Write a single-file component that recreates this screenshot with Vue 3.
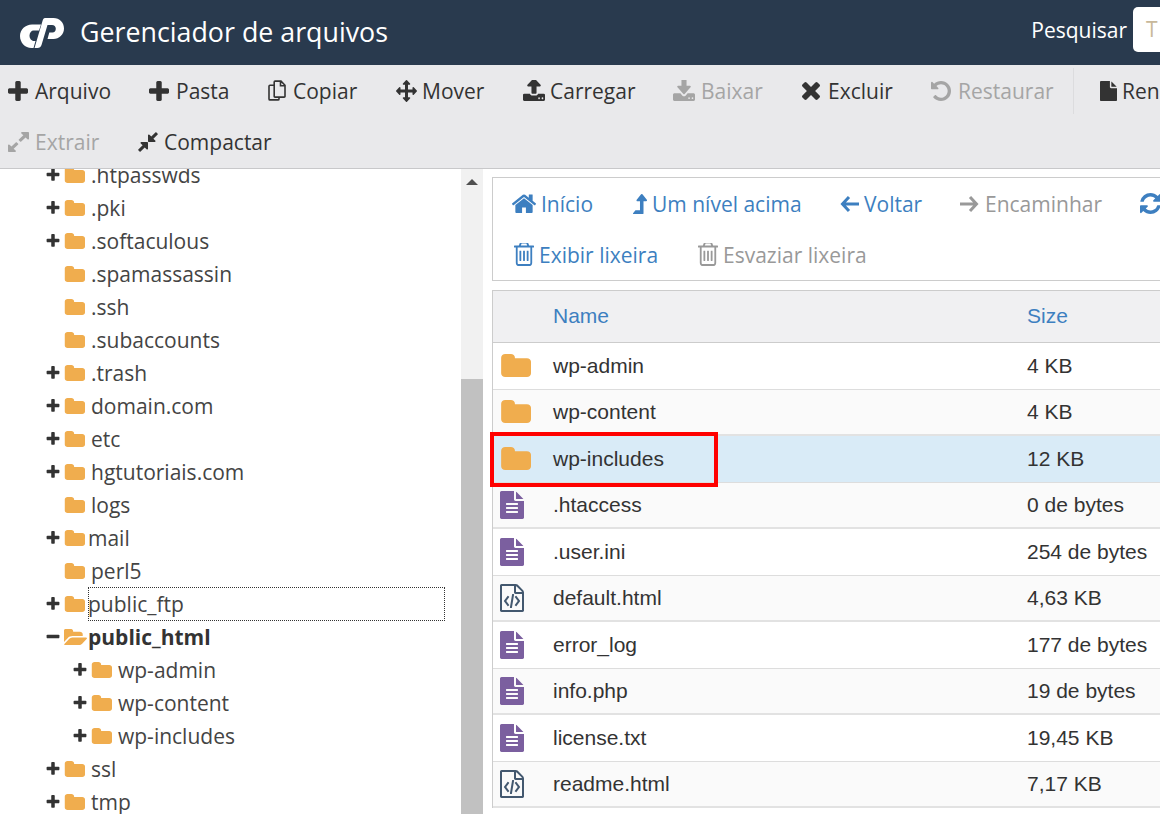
<template>
  <div class="file-manager">
    <header class="top-bar">
      <div class="brand">
        <svg class="logo" viewBox="0 0 44 30">
          <path d="M12 6.500H21L19 12.500H13.500C11.500 12.500 9.500 14.500 9.500 17.500C9.500 20.500 11.500 23 14 23H15.500L13.500 30H11.500C5 30 0 24.500 0 18C0 11.500 5.500 6.500 12 6.500Z" />
          <path d="M25 0H33.500C39.500 0 44 4.500 44 10.500C44 16.500 39 21 33.500 21H27.500L29.300 14.500H32.500C34.500 14.500 35.800 13 35.800 10.800C35.800 8.500 34.300 7 32 7H27.500L21.500 27C20.900 29 19.500 30 17.500 30H14.500L22.500 3C23 1.200 23.800 0 25 0Z" />
        </svg>
        <h1>Gerenciador de arquivos</h1>
      </div>
      <div class="search">
        <label>Pesquisar</label>
        <div class="search-input">T</div>
      </div>
    </header>

    <div class="toolbar">
      <div class="toolbar-row" v-for="(row, r) in toolbar" :key="r">
        <template v-for="item in row" :key="item.label">
          <span v-if="item.divider" class="divider"></span>
          <a class="tool" :class="{ disabled: item.disabled }" :style="{ width: item.w + 'px' }">
            <svg
              class="glyph"
              :class="{ outline: glyphs[item.icon].outline }"
              :viewBox="glyphs[item.icon].vb"
              :width="item.iw"
              :height="item.ih"
              :style="{ marginRight: item.gap + 'px' }"
              preserveAspectRatio="none"
            >
              <path :d="glyphs[item.icon].d" />
            </svg>
            <span>{{ item.label }}</span>
          </a>
        </template>
      </div>
    </div>

    <div class="main">
      <aside class="sidebar">
        <ul class="tree">
          <li
            v-for="node in tree"
            :key="node.name + node.depth"
            class="tree-row"
            :class="{ deep: node.depth, current: node.open, focused: node.focus, tight: node.tight }"
          >
            <svg v-if="node.toggle" class="toggle" viewBox="128 128 1536 1536">
              <path :d="node.open ? glyphs.minus.d : glyphs.plus.d" />
            </svg>
            <span v-else class="toggle"></span>
            <svg v-if="node.open" class="tree-folder open" viewBox="0 128 1845 1408" preserveAspectRatio="none">
              <path :d="glyphs.folderOpen.d" />
            </svg>
            <svg v-else class="tree-folder" viewBox="0 128 1728 1408" preserveAspectRatio="none">
              <path :d="glyphs.folder.d" />
            </svg>
            <span class="tree-name">{{ node.name }}</span>
          </li>
        </ul>
        <div class="scrollbar">
          <span class="scroll-up"></span>
          <span class="scroll-thumb"></span>
        </div>
      </aside>

      <section class="content">
        <nav class="actions">
          <div v-for="(row, r) in actions" :key="r" class="actions-row">
            <a
              v-for="a in row"
              :key="a.label"
              class="action"
              :class="{ disabled: a.disabled }"
              :style="{ width: a.w + 'px' }"
            >
              <svg
                class="glyph"
                :class="{ outline: glyphs[a.icon].outline }"
                :viewBox="glyphs[a.icon].vb"
                :width="a.iw"
                :height="a.ih"
                :style="{ marginRight: a.gap + 'px' }"
                preserveAspectRatio="none"
              >
                <path :d="glyphs[a.icon].d" />
              </svg>
              <span>{{ a.label }}</span>
            </a>
          </div>
        </nav>

        <div class="files">
          <div class="file-row file-head">
            <span class="col-icon"></span>
            <span class="col-name">Name</span>
            <span class="col-size">Size</span>
          </div>
          <div
            v-for="(f, i) in files"
            :key="f.name"
            class="file-row"
            :class="{ selected: f.selected, striped: i % 2 === 1 }"
          >
            <span class="col-icon">
              <svg v-if="f.type === 'folder'" class="ic-folder" viewBox="0 128 1728 1408" preserveAspectRatio="none">
                <path :d="glyphs.folder.d" />
              </svg>
              <svg v-else-if="f.type === 'text'" class="ic-file" viewBox="128 0 1536 1792">
                <path :d="glyphs.fileText.d" />
              </svg>
              <svg v-else class="ic-code" viewBox="128 0 1536 1792">
                <path :d="glyphs.fileCode.d" />
              </svg>
            </span>
            <span class="col-name">{{ f.name }}</span>
            <span class="col-size">{{ f.size }}</span>
          </div>
        </div>
      </section>
    </div>

    <div class="highlight"></div>
  </div>
</template>

<script setup>
// Icon shapes, each with the box that fits it tightly
const glyphs = {
  plus: { vb: '192 128 1408 1408', d: 'M1600 736v192q0 40-28 68t-68 28h-416v416q0 40-28 68t-68 28h-192q-40 0-68-28t-28-68v-416h-416q-40 0-68-28t-28-68v-192q0-40 28-68t68-28h416v-416q0-40 28-68t68-28h192q40 0 68 28t28 68v416h416q40 0 68 28t28 68z' },
  minus: { d: 'M1600 736v192q0 40-28 68t-68 28h-1216q-40 0-68-28t-28-68v-192q0-40 28-68t68-28h1216q40 0 68 28t28 68z' },
  folder: { d: 'M1728 608v704q0 92-66 158t-158 66h-1216q-92 0-158-66t-66-158v-960q0-92 66-158t158-66h320q92 0 158 66t66 158v32h672q92 0 158 66t66 158z' },
  folderOpen: { d: 'M1845 931q0 35-53 93l-336 396q-43 51-120.500 86.500t-143.500 35.500h-1088q-34 0-60.500-13t-26.500-43q0-35 53-93l336-396q43-51 120.500-86.500t143.500-35.500h1088q34 0 60.500 13t26.500 43zm-343-344v160h-832q-94 0-197 47.500t-164 119.500l-337 396-5 6q0-4-.5-12.500t-.5-12.500v-960q0-92 66-158t158-66h320q92 0 158 66t66 158v32h544q92 0 158 66t66 158z' },
  fileText: { d: 'M1596 476q14 14 28 36h-472v-472q22 14 36 28zm-476 164h544v1056q0 40-28 68t-68 28h-1344q-40 0-68-28t-28-68v-1600q0-40 28-68t68-28h800v544q0 40 28 68t68 28zm160 736v-64q0-14-9-23t-23-9h-704q-14 0-23 9t-9 23v64q0 14 9 23t23 9h704q14 0 23-9t9-23zm0-256v-64q0-14-9-23t-23-9h-704q-14 0-23 9t-9 23v64q0 14 9 23t23 9h704q14 0 23-9t9-23zm0-256v-64q0-14-9-23t-23-9h-704q-14 0-23 9t-9 23v64q0 14 9 23t23 9h704q14 0 23-9t9-23z' },
  fileCode: { d: 'M1596 380q28 28 48 76t20 88v1152q0 40-28 68t-68 28h-1344q-40 0-68-28t-28-68v-1600q0-40 28-68t68-28h896q40 0 88 20t76 48zm-444-244v376h376q-10-29-22-41l-313-313q-12-12-41-22zm384 1528v-1024h-416q-40 0-68-28t-28-68v-416h-768v1536h1280zm-928-896q8-11 21-12.500t24 6.500l51 38q11 8 12.500 21t-6.500 24l-182 243 182 243q8 11 6.500 24t-12.500 21l-51 38q-11 8-24 6.500t-21-12.500l-226-301q-14-19 0-38zm802 301q14 19 0 38l-226 301q-8 11-21 12.500t-24-6.500l-51-38q-11-8-12.500-21t6.500-24l182-243-182-243q-8-11-6.500-24t12.500-21l51-38q11-8 24-6.500t21 12.500zm-620 461q-13-2-20.500-13t-5.500-24l138-831q2-13 13-20.500t24-5.500l63 10q13 2 20.500 13t5.500 24l-138 831q-2 13-13 20.500t-24 5.500z' },
  home: { vb: '96 224 1600 1312', d: 'M1472 992v480q0 26-19 45t-45 19h-384v-384h-256v384h-384q-26 0-45-19t-19-45v-480q0-1 .5-3t.5-3l575-474 575 474q1 2 1 6zm223-69l-62 74q-8 9-21 11h-3q-13 0-21-7l-692-577-692 577q-12 8-24 7-13-2-21-11l-62-74q-8-10-7-23.500t11-21.500l719-599q32-26 76-26t76 26l244 204v-195q0-14 9-23t23-9h192q14 0 23 9t9 23v408l219 182q10 8 11 21.500t-7 23.500z' },
  arrowLeft: { vb: '0 0 19 18', outline: true, d: 'M9 2 2.500 9 9 16M3 9h16' },
  arrowRight: { vb: '0 0 19 18', outline: true, d: 'M10 2l6.500 7-6.500 7M16 9H0' },
  levelUp: { vb: '381 162 1020 1403', d: 'M1395 635q-18 34-57 34h-192v864q0 14-9 23t-23 9h-704q-21 0-29-18-8-20 4-35l160-192q9-11 25-11h320v-640h-192q-40 0-57-35-17-35 10-66l320-384q18-22 49-22t49 22l320 384q26 31 9 66z' },
  trash: { vb: '192 224 1408 1440', d: 'M704 736v576q0 14-9 23t-23 9h-64q-14 0-23-9t-9-23v-576q0-14 9-23t23-9h64q14 0 23 9t9 23zm256 0v576q0 14-9 23t-23 9h-64q-14 0-23-9t-9-23v-576q0-14 9-23t23-9h64q14 0 23 9t9 23zm256 0v576q0 14-9 23t-23 9h-64q-14 0-23-9t-9-23v-576q0-14 9-23t23-9h64q14 0 23 9t9 23zm128 724v-948h-896v948q0 22 7 40.500t14.500 27 10.500 8.500h832q3 0 10.500-8.500t14.500-27 7-40.500zm-672-1076h448l-48-117q-7-9-17-11h-317q-10 2-17 11zm928 32v64q0 14-9 23t-23 9h-96v948q0 83-47 143.500t-113 60.500h-832q-66 0-113-58.500t-47-141.500v-952h-96q-14 0-23-9t-9-23v-64q0-14 9-23t23-9h309l70-167q15-37 54-63t79-26h320q40 0 79 26t54 63l70 167h309q14 0 23 9t9 23z' },
  refresh: { vb: '128 128 1536 1536', d: 'M1639 1056q0 5-1 7-64 268-268 434.500t-478 166.500q-146 0-282.500-55t-243.500-157l-129 129q-19 19-45 19t-45-19-19-45v-448q0-26 19-45t45-19h448q26 0 45 19t19 45-19 45l-137 137q71 66 161 102t187 36q134 0 250-65t186-179q11-17 53-117 8-23 30-23h192q13 0 22.500 9.500t9.500 22.500zm25-800v448q0 26-19 45t-45 19h-448q-26 0-45-19t-19-45 19-45l138-138q-148-137-349-137-134 0-250 65t-186 179q-11 17-53 117-8 23-30 23h-199q-13 0-22.500-9.500t-9.500-22.500v-7q65-268 270-434.500t480-166.500q146 0 284 55.500t245 156.500l130-129q19-19 45-19t45 19 19 45z' },
  times: { vb: '302 366 1188 1188', d: 'M1490 1322q0 40-28 68l-136 136q-28 28-68 28t-68-28l-294-294-294 294q-28 28-68 28t-68-28l-136-136q-28-28-28-68t28-68l294-294-294-294q-28-28-28-68t28-68l136-136q28-28 68-28t68 28l294 294 294-294q28-28 68-28t68 28l136 136q28 28 28 68t-28 68l-294 294 294 294q28 28 28 68z' },
  move: { vb: '0 0 1792 1792', d: 'M1792 896q0 26-19 45l-256 256q-19 19-45 19t-45-19-19-45v-128h-384v384h128q26 0 45 19t19 45-19 45l-256 256q-19 19-45 19t-45-19l-256-256q-19-19-19-45t19-45 45-19h128v-384h-384v128q0 26-19 45t-45 19-45-19l-256-256q-19-19-19-45t19-45l256-256q19-19 45-19t45 19 19 45v128h384v-384h-128q-26 0-45-19t-19-45 19-45l256-256q19-19 45-19t45 19l256 256q19 19 19 45t-19 45-45 19h-128v384h384v-128q0-26 19-45t45-19 45 19l256 256q19 19 19 45z' },
  copy: { vb: '0 0 18 20', outline: true, d: 'M7 1h6l4 4v10.500a.8.8 0 0 1-.8.8H7a.8.8 0 0 1-.8-.8V1.800A.8.8 0 0 1 7 1zM12.500 1v4.500H17M6 5H2a1 1 0 0 0-1 1v12a1 1 0 0 0 1 1h8a1 1 0 0 0 1-1v-2' },
  upload: { vb: '64 192 1664 1472', d: 'M1344 1472q0-26-19-45t-45-19-45 19-19 45 19 45 45 19 45-19 19-45zm256 0q0-26-19-45t-45-19-45 19-19 45 19 45 45 19 45-19 19-45zm128-224v320q0 40-28 68t-68 28h-1472q-40 0-68-28t-28-68v-320q0-40 28-68t68-28h427q21 56 70.500 92t110.500 36h256q61 0 110.500-36t70.500-92h427q40 0 68 28t28 68zm-325-648q-17 40-59 40h-256v448q0 26-19 45t-45 19h-256q-26 0-45-19t-19-45v-448h-256q-42 0-59-40-17-39 14-69l448-448q18-19 45-19t45 19l448 448q31 30 14 69z' },
  download: { vb: '64 128 1664 1408', d: 'M1344 1344q0-26-19-45t-45-19-45 19-19 45 19 45 45 19 45-19 19-45zm256 0q0-26-19-45t-45-19-45 19-19 45 19 45 45 19 45-19 19-45zm128-224v320q0 40-28 68t-68 28h-1472q-40 0-68-28t-28-68v-320q0-40 28-68t68-28h465l135 136q58 56 136 56t136-56l136-136h464q40 0 68 28t28 68zm-325-569q17 41-14 70l-448 448q-18 19-45 19t-45-19l-448-448q-31-29-14-70 17-39 59-39h256v-448q0-26 19-45t45-19h256q26 0 45 19t19 45v448h256q42 0 59 39z' },
  undo: { vb: '128 128 1536 1536', d: 'M1664 896q0 156-61 298t-164 245-245 164-298 61q-172 0-327-72.500t-264-204.500q-7-10-6.500-22.500t8.500-20.500l137-138q10-9 25-9 16 2 23 12 73 95 179 147t225 52q104 0 198.500-40.500t163.500-109.500 109.500-163.500 40.500-198.500-40.500-198.500-109.500-163.500-163.500-109.500-198.500-40.500q-98 0-188 35.500t-160 101.500l137 138q31 30 14 69-17 40-59 40h-448q-26 0-45-19t-19-45v-448q0-42 40-59 39-17 69 14l130 129q107-101 244.500-156.500t284.500-55.500q156 0 298 61t245 164 164 245 61 298z' },
  file: { vb: '128 0 1536 1792', d: 'M1152 512v-472q22 14 36 28l408 408q14 14 28 36h-472zm-128 32q0 40 28 68t68 28h544v1056q0 40-28 68t-68 28h-1344q-40 0-68-28t-28-68v-1600q0-40 28-68t68-28h800v544z' },
  expand: { vb: '128 128 1536 1536', d: 'M883 1056q0 13-10 23l-332 332 144 144q19 19 19 45t-19 45-45 19h-448q-26 0-45-19t-19-45v-448q0-26 19-45t45-19 45 19l144 144 332-332q10-10 23-10t23 10l114 114q10 10 10 23zm781-864v448q0 26-19 45t-45 19-45-19l-144-144-332 332q-10 10-23 10t-23-10l-114-114q-10-10-10-23t10-23l332-332-144-144q-19-19-19-45t19-45 45-19h448q26 0 45 19t19 45z' },
  compress: { vb: '128 128 1536 1536', d: 'M896 960v448q0 26-19 45t-45 19-45-19l-144-144-332 332q-10 10-23 10t-23-10l-114-114q-10-10-10-23t10-23l332-332-144-144q-19-19-19-45t19-45 45-19h448q26 0 45 19t19 45zm755-672q0 13-10 23l-332 332 144 144q19 19 19 45t-19 45-45 19h-448q-26 0-45-19t-19-45v-448q0-26 19-45t45-19 45 19l144 144 332-332q10-10 23-10t23 10l114 114q10 10 10 23z' }
}

const toolbar = [
  [
    { label: 'Arquivo', icon: 'plus', w: 141, iw: 20, ih: 20, gap: 7 },
    { label: 'Pasta', icon: 'plus', w: 119, iw: 20, ih: 20, gap: 7 },
    { label: 'Copiar', icon: 'copy', w: 128, iw: 18, ih: 21, gap: 7 },
    { label: 'Mover', icon: 'move', w: 127, iw: 21, ih: 22, gap: 5 },
    { label: 'Carregar', icon: 'upload', w: 150, iw: 22, ih: 21, gap: 5 },
    { label: 'Baixar', icon: 'download', w: 129, iw: 22, ih: 21, gap: 6, disabled: true },
    { label: 'Excluir', icon: 'times', w: 129, iw: 18, ih: 18, gap: 8 },
    { label: 'Restaurar', icon: 'undo', w: 142, iw: 20, ih: 20, gap: 7, disabled: true },
    { label: 'Renomear', icon: 'file', w: 140, iw: 17, ih: 20, gap: 5, divider: true }
  ],
  [
    { label: 'Extrair', icon: 'expand', w: 130, iw: 21, ih: 20, gap: 6, disabled: true },
    { label: 'Compactar', icon: 'compress', w: 160, iw: 20, ih: 20, gap: 6 }
  ]
]

const actions = [
  [
    { label: 'Início', icon: 'home', w: 121, iw: 24, ih: 19, gap: 5 },
    { label: 'Um nível acima', icon: 'levelUp', w: 207, iw: 14, ih: 20, gap: 5 },
    { label: 'Voltar', icon: 'arrowLeft', w: 120, iw: 19, ih: 18, gap: 5 },
    { label: 'Encaminhar', icon: 'arrowRight', w: 180, iw: 19, ih: 18, gap: 6, disabled: true },
    { label: 'Recarregar', icon: 'refresh', w: 140, iw: 21, ih: 21, gap: 5 }
  ],
  [
    { label: 'Exibir lixeira', icon: 'trash', w: 184, iw: 20, ih: 23, gap: 5 },
    { label: 'Esvaziar lixeira', icon: 'trash', w: 190, iw: 20, ih: 23, gap: 5, disabled: true }
  ]
]

const treeNames = [
  ['.htpasswds', 1], ['.pki', 1], ['.softaculous', 1], ['.spamassassin', 0], ['.ssh', 0],
  ['.subaccounts', 0], ['.trash', 1], ['domain.com', 1], ['etc', 1], ['hgtutoriais.com', 1],
  ['logs', 0]
]

const tree = [
  ...treeNames.map(([name, toggle]) => ({ name, toggle, depth: 0 })),
  { name: 'mail', toggle: 1, depth: 0, tight: true },
  { name: 'perl5', toggle: 0, depth: 0 },
  { name: 'public_ftp', toggle: 1, depth: 0, focus: true },
  { name: 'public_html', toggle: 1, depth: 0, open: true },
  { name: 'wp-admin', toggle: 1, depth: 1 },
  { name: 'wp-content', toggle: 1, depth: 1 },
  { name: 'wp-includes', toggle: 1, depth: 1 },
  { name: 'ssl', toggle: 1, depth: 0 },
  { name: 'tmp', toggle: 1, depth: 0 }
]

const files = [
  { name: 'wp-admin', size: '4 KB', type: 'folder' },
  { name: 'wp-content', size: '4 KB', type: 'folder' },
  { name: 'wp-includes', size: '12 KB', type: 'folder', selected: true },
  { name: '.htaccess', size: '0 de bytes', type: 'text' },
  { name: '.user.ini', size: '254 de bytes', type: 'text' },
  { name: 'default.html', size: '4,63 KB', type: 'code' },
  { name: 'error_log', size: '177 de bytes', type: 'text' },
  { name: 'info.php', size: '19 de bytes', type: 'text' },
  { name: 'license.txt', size: '19,45 KB', type: 'text' },
  { name: 'readme.html', size: '7,17 KB', type: 'code' }
]
</script>

<style>
html, body {
  margin: 0;
  overflow: hidden;
  background: #fff;
}
</style>

<style scoped>
.file-manager {
  position: relative;
  width: 1160px;
  height: 814px;
  overflow: hidden;
  font-family: "Open Sans", sans-serif;
  font-size: 21px;
  color: #333;
}

/* top bar */
.top-bar {
  display: flex;
  justify-content: space-between;
  align-items: center;
  height: 65px;
  padding-left: 20px;
  background: #293a4e;
  color: #fff;
  box-sizing: border-box;
}
.brand {
  display: flex;
  align-items: center;
}
.logo {
  width: 44px;
  height: 30px;
  fill: #fff;
  margin-right: 16px;
}
h1 {
  margin: -2px 0 0;
  font-size: 26.8px;
  font-weight: 400;
}
.search {
  display: flex;
  align-items: center;
  margin-right: -50px;
  margin-top: -6px;
}
.search label {
  margin-right: 6px;
}
.search-input {
  width: 77px;
  height: 45px;
  line-height: 45px;
  padding-left: 13px;
  background: #fff;
  border-radius: 5px;
  color: #c8b89a;
  box-sizing: border-box;
}

/* toolbar */
.toolbar {
  height: 104px;
  padding-left: 8px;
  background: #e9e9eb;
  border-bottom: 1px solid #c8c8ca;
  box-sizing: border-box;
}
.toolbar-row {
  display: flex;
  align-items: center;
  height: 51px;
  white-space: nowrap;
}
.tool {
  display: flex;
  align-items: center;
  flex: none;
  color: #333;
}
.tool.disabled {
  color: #a5a5a5;
}
.glyph {
  flex: none;
  fill: currentColor;
}
.glyph.outline {
  fill: none;
  stroke: currentColor;
  stroke-width: 3;
}
.tool .glyph.outline {
  stroke-width: 1.6;
}
.divider {
  flex: none;
  width: 1px;
  height: 46px;
  background: #dcdcde;
  margin-right: 26px;
}

/* main area */
.main {
  display: flex;
  height: 645px;
}
.sidebar {
  display: flex;
  width: 483px;
  flex: none;
  overflow: hidden;
}
.tree {
  flex: 1;
  margin: -11px 0 0;
  padding: 0;
  list-style: none;
}
.tree-row {
  display: flex;
  align-items: center;
  height: 33px;
  padding-left: 46px;
  color: #444;
}
.tree-row.deep {
  padding-left: 73px;
}
.toggle {
  width: 14px;
  height: 14px;
  flex: none;
  fill: #333;
  margin-right: 4px;
}
.tree-folder {
  width: 21px;
  height: 16px;
  flex: none;
  fill: #f0ad4e;
  margin-right: 6px;
}
.tree-folder.open {
  width: 23px;
  margin-right: 4px;
}
.tree-row.tight .tree-name {
  margin-left: -3px;
}
.tree-row.current .tree-name {
  font-weight: 700;
  color: #333;
  margin-left: -3px;
}
.tree-row.focused .tree-name {
  flex: none;
  width: 357px;
  height: 34px;
  line-height: 34px;
  margin-left: -3px;
  outline: 1px dotted #333;
  outline-offset: -1px;
}
.scrollbar {
  display: flex;
  flex-direction: column;
  width: 22px;
  flex: none;
  background: #f1f1f1;
}
.scroll-up {
  width: 0;
  height: 0;
  margin: 10px auto 0;
  border-left: 6px solid transparent;
  border-right: 6px solid transparent;
  border-bottom: 6px solid #505050;
}
.scroll-thumb {
  margin-top: 194px;
  flex: 1;
  background: #c1c1c1;
}

/* right side */
.content {
  flex: none;
  width: 760px;
  margin-left: 9px;
  padding-top: 8px;
}
.actions {
  height: 104px;
  padding: 0 0 2px 19px;
  background: #fff;
  border: 1px solid #ccc;
  box-sizing: border-box;
}
.actions-row {
  display: flex;
  align-items: center;
  height: 51px;
  white-space: nowrap;
}
.actions-row + .actions-row {
  padding-left: 2px;
}
.action {
  display: flex;
  align-items: center;
  flex: none;
  color: #3d7fc0;
}
.action.disabled {
  color: #999;
}
.files {
  margin-top: 9px;
  border-left: 1px solid #ccc;
  font-family: "Liberation Sans", Arial, sans-serif;
}
.file-row {
  display: flex;
  align-items: center;
  height: 46.5px;
  border-bottom: 1px solid #ddd;
  box-sizing: border-box;
}
.file-row.striped {
  background: #fafafa;
  border-bottom: 2px solid #e2e2e2;
}
.file-head {
  height: 53px;
  padding-bottom: 2px;
  background: #f0f0f2;
  border-top: 1px solid #ccc;
  border-bottom: 1px solid #ccc;
  color: #3d7fc0;
}
.file-row.selected {
  background: #d9ebf7;
}
.col-icon {
  display: flex;
  align-items: center;
  width: 60px;
  padding-left: 7px;
  box-sizing: border-box;
  flex: none;
}
.col-name {
  width: 474px;
  flex: none;
}
.ic-folder {
  width: 31px;
  height: 23px;
  fill: #f0ad4e;
}
.ic-file {
  width: 24px;
  height: 30px;
  fill: #7b5f9f;
}
.ic-code {
  width: 24px;
  height: 30px;
  fill: #43586f;
}

/* annotation drawn over the screenshot */
.highlight {
  position: absolute;
  left: 490px;
  top: 432px;
  width: 228px;
  height: 55px;
  border: 4px solid #f00;
  box-sizing: border-box;
  pointer-events: none;
}
</style>
